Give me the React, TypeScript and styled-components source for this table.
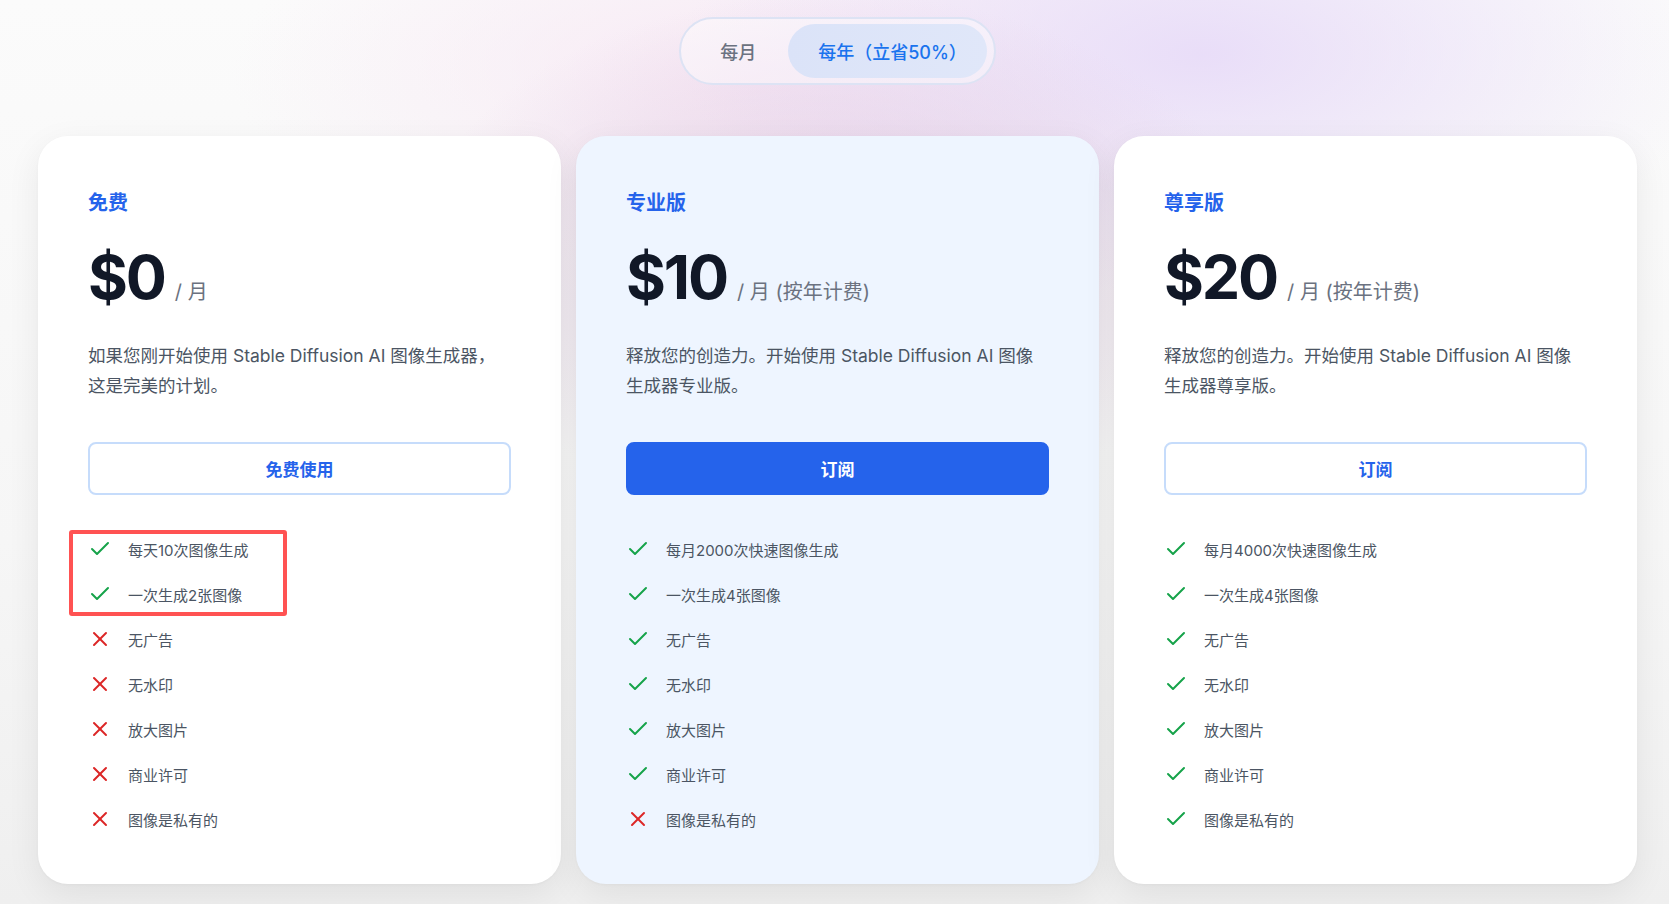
import React from "react";
import styled, { createGlobalStyle } from "styled-components";
import { Check, X } from "lucide-react";

const GlobalStyle = createGlobalStyle`
  html, body {
    margin: 0;
    padding: 0;
  }
  body {
    font-family: "Inter", "Noto Sans CJK SC", sans-serif;
    background: #fafafa;
    -webkit-font-smoothing: antialiased;
  }
  *, *::before, *::after { box-sizing: border-box; }
`;

const Page = styled.div`
  min-height: 904px;
  padding: 17px 32px 19px 38px;
  display: flex;
  flex-direction: column;
  align-items: center;
  gap: 51px;
  background:
    radial-gradient(ellipse 420px 260px at 50% 28%, rgba(222, 196, 224, 0.75), rgba(222, 196, 224, 0) 100%),
    radial-gradient(ellipse 520px 240px at 72% 6%, rgba(232, 220, 248, 0.95), rgba(232, 220, 248, 0) 100%),
    radial-gradient(ellipse 520px 200px at 45% 8%, rgba(247, 232, 244, 0.95), rgba(247, 232, 244, 0) 100%),
    linear-gradient(180deg, #fbfbfb 0%, #f6f6f6 60%, #efefef 100%);
`;

const Toggle = styled.div`
  display: flex;
  align-items: center;
  padding: 5px 7px;
  border: 2px solid #dde3f4;
  border-radius: 999px;
  background: rgba(255, 255, 255, 0.45);
`;

const ToggleButton = styled.button<{ $active?: boolean }>`
  height: 54px;
  padding: ${(p) => (p.$active ? "0 20px 0 30px" : "0 32px")};
  border: none;
  border-radius: 999px;
  font-family: inherit;
  font-size: 18px;
  font-weight: 500;
  cursor: pointer;
  color: ${(p) => (p.$active ? "#1a73ee" : "#6b7280")};
  background: ${(p) =>
    p.$active ? "linear-gradient(90deg, #dbe3f8 0%, #e0e7f9 100%)" : "transparent"};
`;

const Grid = styled.div`
  display: grid;
  grid-template-columns: repeat(3, 523px);
  gap: 15px;
`;

const Card = styled.div<{ $featured?: boolean }>`
  display: flex;
  flex-direction: column;
  padding: 53px 50px 53px;
  border-radius: 30px;
  background: ${(p) => (p.$featured ? "#eef5ff" : "#ffffff")};
  box-shadow: 0 10px 34px rgba(0, 0, 0, 0.07), 0 1px 3px rgba(0, 0, 0, 0.03);
`;

const PlanName = styled.h3`
  margin: 0;
  font-size: 20px;
  line-height: 28px;
  font-weight: 700;
  color: #2563eb;
`;

const PriceRow = styled.div`
  margin-top: 28px;
  display: flex;
  align-items: baseline;
  height: 64px;
`;

const Price = styled.span`
  font-size: 61px;
  line-height: 64px;
  font-weight: 700;
  letter-spacing: -0.035em;
  color: #111827;
`;

const Period = styled.span`
  margin-left: 10px;
  font-size: 20px;
  color: #6b7280;
`;

const Description = styled.p`
  margin: 32px 0 0;
  max-width: 412px;
  font-size: 17.5px;
  line-height: 30px;
  color: #4b5563;
`;

const ActionButton = styled.button<{ $primary?: boolean }>`
  margin-top: 41px;
  height: 53px;
  width: 100%;
  border-radius: 8px;
  font-family: inherit;
  font-size: 17px;
  font-weight: 700;
  cursor: pointer;
  color: ${(p) => (p.$primary ? "#ffffff" : "#2563eb")};
  background: ${(p) => (p.$primary ? "#2563eb" : "#ffffff")};
  border: 2px solid ${(p) => (p.$primary ? "#2563eb" : "#c6dcfb")};
`;

const FeatureList = styled.ul`
  list-style: none;
  margin: 42px 0 0;
  padding: 0;
  display: flex;
  flex-direction: column;
  gap: 21px;
`;

const Highlight = styled.div`
  position: relative;
  display: flex;
  flex-direction: column;
  gap: 21px;
  &::after {
    content: "";
    position: absolute;
    left: -19px;
    top: -7px;
    width: 218px;
    height: 86px;
    border: 4px solid #ff5252;
    border-radius: 3px;
    pointer-events: none;
  }
`;

const Feature = styled.li`
  display: flex;
  align-items: center;
  gap: 16px;
  height: 24px;
  font-size: 15px;
  color: #4b5563;
`;

type Plan = {
  name: string;
  price: string;
  period: string;
  desc: string;
  action: string;
  primary?: boolean;
  featured?: boolean;
  features: [string, boolean][];
  highlight?: number;
};

const plans: Plan[] = [
  {
    name: "免费",
    price: "$0",
    period: "/ 月",
    desc: "如果您刚开始使用 Stable Diffusion AI 图像生成器，这是完美的计划。",
    action: "免费使用",
    highlight: 2,
    features: [
      ["每天10次图像生成", true],
      ["一次生成2张图像", true],
      ["无广告", false],
      ["无水印", false],
      ["放大图片", false],
      ["商业许可", false],
      ["图像是私有的", false],
    ],
  },
  {
    name: "专业版",
    price: "$10",
    period: "/ 月 (按年计费)",
    desc: "释放您的创造力。开始使用 Stable Diffusion AI 图像生成器专业版。",
    action: "订阅",
    primary: true,
    featured: true,
    features: [
      ["每月2000次快速图像生成", true],
      ["一次生成4张图像", true],
      ["无广告", true],
      ["无水印", true],
      ["放大图片", true],
      ["商业许可", true],
      ["图像是私有的", false],
    ],
  },
  {
    name: "尊享版",
    price: "$20",
    period: "/ 月 (按年计费)",
    desc: "释放您的创造力。开始使用 Stable Diffusion AI 图像生成器尊享版。",
    action: "订阅",
    features: [
      ["每月4000次快速图像生成", true],
      ["一次生成4张图像", true],
      ["无广告", true],
      ["无水印", true],
      ["放大图片", true],
      ["商业许可", true],
      ["图像是私有的", true],
    ],
  },
];

const FeatureItem: React.FC<{ text: string; ok: boolean }> = ({ text, ok }) => (
  <Feature>
    {ok ? (
      <Check size={24} strokeWidth={2} color="#16a34a" />
    ) : (
      <X size={24} strokeWidth={2} color="#dc2626" />
    )}
    <span>{text}</span>
  </Feature>
);

export default function App() {
  return (
    <>
      <GlobalStyle />
      <Page>
        <Toggle>
          <ToggleButton>每月</ToggleButton>
          <ToggleButton $active>每年（立省50%）</ToggleButton>
        </Toggle>
        <Grid>
          {plans.map((plan) => {
            const hl = plan.highlight ?? 0;
            const top = plan.features.slice(0, hl);
            const rest = plan.features.slice(hl);
            return (
              <Card key={plan.name} $featured={plan.featured}>
                <PlanName>{plan.name}</PlanName>
                <PriceRow>
                  <Price>{plan.price}</Price>
                  <Period>{plan.period}</Period>
                </PriceRow>
                <Description>{plan.desc}</Description>
                <ActionButton $primary={plan.primary}>{plan.action}</ActionButton>
                <FeatureList>
                  {hl > 0 && (
                    <Highlight>
                      {top.map(([t, ok]) => (
                        <FeatureItem key={t} text={t} ok={ok} />
                      ))}
                    </Highlight>
                  )}
                  {rest.map(([t, ok]) => (
                    <FeatureItem key={t} text={t} ok={ok} />
                  ))}
                </FeatureList>
              </Card>
            );
          })}
        </Grid>
      </Page>
    </>
  );
}
